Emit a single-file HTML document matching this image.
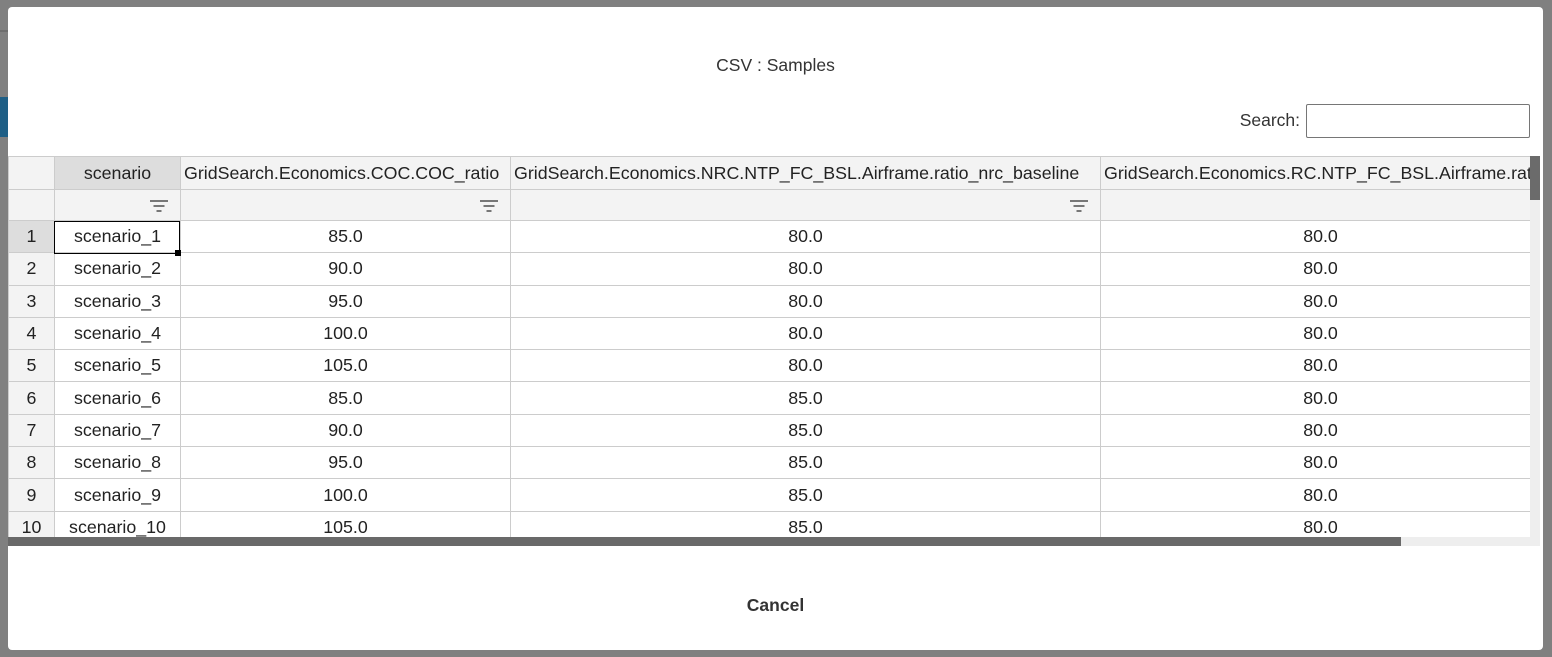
<!DOCTYPE html>
<html><head><style>
body{margin:0;width:1552px;height:657px;background:#808080;font-family:"Liberation Sans",sans-serif;position:relative;overflow:hidden;color:#222}
.bgline{position:absolute;background:#6e6e6e}
.dlg{position:absolute;left:8px;top:7px;width:1535px;height:643px;background:#fff;border-radius:4px;overflow:hidden}
.title{position:absolute;top:48px;width:100%;text-align:center;font-size:17.5px;color:#333}
.search{position:absolute;right:13px;top:97px;font-size:17.5px;color:#333}
.search span{position:absolute;right:230px;top:6px;white-space:nowrap}
.search div{width:222px;height:32px;border:1px solid #767676;border-radius:2px}
.tbl{position:absolute;left:0;top:149px;width:1522px;height:381px;overflow:hidden}
table{border-collapse:collapse;table-layout:fixed;font-size:17.8px;width:1532px}
td{border:1px solid #ccc;height:31.3px;padding:0;text-align:center;white-space:nowrap;overflow:hidden}
tr.h td{background:#f3f3f3;height:32px;text-align:left;padding-left:3px}
tr.f td{background:#f3f3f3;height:30px}
td.rh{background:#f3f3f3;text-align:center}
.fi{float:right;margin-right:12px;width:18px;height:14px;position:relative}
.fi i{position:absolute;height:2px;background:#777;left:50%;transform:translateX(-50%)}
.vs{position:absolute;left:1522px;top:149px;width:10px;height:388px;background:#eee}
.vs i{position:absolute;left:0;top:0;width:10px;height:44px;background:#6b6b6b}
.hs{position:absolute;left:0;top:530px;width:1532px;height:9px;background:#eee}
.hs i{position:absolute;left:0;top:0;width:1393px;height:9px;background:#696969}
.cancel{position:absolute;top:588px;width:100%;text-align:center;font-size:17.5px;font-weight:bold;color:#333}
</style></head><body>
<div class="bgline" style="left:0;top:30px;width:8px;height:2px"></div>
<div class="bgline" style="left:0;top:97px;width:8px;height:40px;background:#1f5f86"></div>
<div class="dlg">
<div class="title">CSV : Samples</div>
<div class="search"><span>Search:</span><div></div></div>
<div class="tbl">
<table>
<colgroup><col style="width:46px"><col style="width:126px"><col style="width:330px"><col style="width:590px"><col style="width:440px"></colgroup>
<tr class="h"><td></td><td style="background:#ddd;text-align:center;padding:0">scenario</td><td>GridSearch.Economics.COC.COC_ratio</td><td>GridSearch.Economics.NRC.NTP_FC_BSL.Airframe.ratio_nrc_baseline</td><td>GridSearch.Economics.RC.NTP_FC_BSL.Airframe.ratio_rc_baseline</td></tr>
<tr class="f"><td></td><td><span class="fi"><i style="top:2px;width:18px"></i><i style="top:7px;width:11px"></i><i style="top:12px;width:5px"></i></span></td><td><span class="fi"><i style="top:2px;width:18px"></i><i style="top:7px;width:11px"></i><i style="top:12px;width:5px"></i></span></td><td><span class="fi"><i style="top:2px;width:18px"></i><i style="top:7px;width:11px"></i><i style="top:12px;width:5px"></i></span></td><td></td></tr>
<tr><td class="rh" style="background:#ddd">1</td><td>scenario_1</td><td>85.0</td><td>80.0</td><td>80.0</td></tr>
<tr><td class="rh">2</td><td>scenario_2</td><td>90.0</td><td>80.0</td><td>80.0</td></tr>
<tr><td class="rh">3</td><td>scenario_3</td><td>95.0</td><td>80.0</td><td>80.0</td></tr>
<tr><td class="rh">4</td><td>scenario_4</td><td>100.0</td><td>80.0</td><td>80.0</td></tr>
<tr><td class="rh">5</td><td>scenario_5</td><td>105.0</td><td>80.0</td><td>80.0</td></tr>
<tr><td class="rh">6</td><td>scenario_6</td><td>85.0</td><td>85.0</td><td>80.0</td></tr>
<tr><td class="rh">7</td><td>scenario_7</td><td>90.0</td><td>85.0</td><td>80.0</td></tr>
<tr><td class="rh">8</td><td>scenario_8</td><td>95.0</td><td>85.0</td><td>80.0</td></tr>
<tr><td class="rh">9</td><td>scenario_9</td><td>100.0</td><td>85.0</td><td>80.0</td></tr>
<tr><td class="rh">10</td><td>scenario_10</td><td>105.0</td><td>85.0</td><td>80.0</td></tr>
</table>
</div>
<div style="position:absolute;left:46px;top:214px;width:124px;height:31px;border:1px solid #000"></div>
<div style="position:absolute;left:167px;top:243px;width:6px;height:6px;background:#000"></div>
<div class="vs"><i></i></div>
<div class="hs"><i></i></div>
<div class="cancel">Cancel</div>
</div>
</body></html>
